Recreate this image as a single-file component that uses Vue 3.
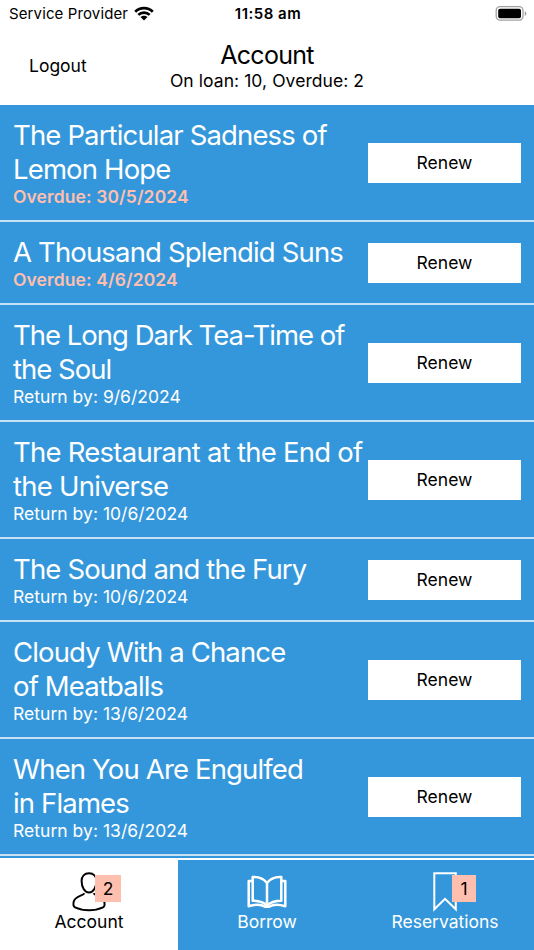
<script setup>
const loans = [
  { title: ['The Particular Sadness of', 'Lemon Hope'], due: '30/5/2024', overdue: true },
  { title: ['A Thousand Splendid Suns'], due: '4/6/2024', overdue: true },
  { title: ['The Long Dark Tea-Time of', 'the Soul'], due: '9/6/2024', tight: true },
  { title: ['The Restaurant at the End of', 'the Universe'], due: '10/6/2024', wide: true },
  { title: ['The Sound and the Fury'], due: '10/6/2024' },
  { title: ['Cloudy With a Chance', 'of Meatballs'], due: '13/6/2024' },
  { title: ['When You Are Engulfed', 'in Flames'], due: '13/6/2024' },
]
</script>

<template>
  <div class="screen">
    <div class="status">
      <div class="carrier">
        <span>Service Provider</span>
        <svg class="wifi" width="20" height="15" viewBox="0 0 20 15">
          <g fill="none" stroke="#000" stroke-width="2.7">
            <path d="M1.2 5.7C6.1 .8 13.9 .8 18.8 5.7" />
            <path d="M4.3 8.9C7.5 5.8 12.5 5.8 15.7 8.9" />
          </g>
          <path d="M6.5 11.1C8.5 9.2 11.5 9.2 13.5 11.1L10 14.6Z" />
        </svg>
      </div>
      <div class="time">11:58 am</div>
      <div class="power">
        <svg width="32" height="15" viewBox="0 0 32 15">
          <rect x="1.2" y=".7" width="26.8" height="13.4" rx="3.8" fill="none" stroke="#a0a0a0" stroke-width="1.3" />
          <rect x="3.2" y="2.8" width="22.8" height="9.4" rx="1.8" />
          <path d="M29.8 5.2C31.8 6 31.8 9 29.8 9.8Z" fill="#999" />
        </svg>
      </div>
    </div>

    <header class="header">
      <a class="logout">Logout</a>
      <div class="heading">
        <h1>Account</h1>
        <p>On loan: 10, Overdue: 2</p>
      </div>
    </header>

    <ul class="loans">
      <li v-for="loan in loans" :key="loan.title[0]" class="loan">
        <div class="info">
          <div v-for="line in loan.title" :key="line" class="title" :class="{ tight: loan.tight, wide: loan.wide }">{{ line }}</div>
          <div v-if="loan.overdue" class="due overdue">Overdue: {{ loan.due }}</div>
          <div v-else class="due">Return by: {{ loan.due }}</div>
        </div>
        <button class="renew">Renew</button>
      </li>
    </ul>

    <nav class="tabs">
      <div class="tab active">
        <div class="icon">
          <svg width="40" height="40" viewBox="0 0 40 40" fill="none" stroke="#000" stroke-width="2">
            <path d="M20 1.2C15.5 1.2 12.6 4.3 12.6 9C12.6 15 15.6 20.6 20 20.6S27.4 15 27.4 9C27.4 4.3 24.5 1.2 20 1.2Z" />
            <path d="M15.4 21.2C14.4 24.2 5.8 23.4 4.6 30.2C4.1 33 4.4 34.6 6 35.3C14 39.1 26 39.1 34 35.3C35.6 34.6 35.9 33 35.4 30.2C34.2 23.4 25.6 24.2 24.6 21.2" />
          </svg>
          <span class="badge">2</span>
        </div>
        <span class="label">Account</span>
      </div>
      <div class="tab">
        <div class="icon">
          <svg width="40" height="40" viewBox="0 0 40 40" fill="none" stroke="#fff" stroke-width="2.5" stroke-linejoin="round">
            <path d="M20 11C17 6.8 12 4.6 5.7 5V28.7C12 28.7 16.8 30.2 20 33.6C23.2 30.2 28 28.7 34.3 28.7V5C28 4.6 23 6.8 20 11V34" />
            <path d="M5.5 9H1.7V34.2C8 32.2 14 32 18 34.8H22C26 32 32 32.2 38.3 34.2V9H34.5" />
          </svg>
        </div>
        <span class="label">Borrow</span>
      </div>
      <div class="tab">
        <div class="icon">
          <svg width="40" height="40" viewBox="0 0 40 40" fill="none" stroke="#fff" stroke-width="2">
            <path d="M9.3 1.3H30.8V37.3L20 26.9L9.3 37.3Z" />
          </svg>
          <span class="badge narrow">1</span>
        </div>
        <span class="label">Reservations</span>
      </div>
    </nav>
  </div>
</template>

<style>
body {
  margin: 0;
  overflow: hidden;
}
</style>

<style scoped>
.screen {
  width: 534px;
  height: 950px;
  display: flex;
  flex-direction: column;
  background: #fff;
  color: #000;
  font-family: Inter, "Liberation Sans", sans-serif;
}
.status {
  display: grid;
  grid-template-columns: 1fr auto 1fr;
  align-items: center;
  height: 27px;
  margin-bottom: 1px;
  padding: 0 7px 0 9px;
  font-size: 15px;
}
.carrier {
  display: flex;
  align-items: center;
  gap: 6px;
  letter-spacing: 0.12px;
}
.wifi {
  margin-top: -1px;
}
.time {
  font-weight: 600;
  letter-spacing: 0.5px;
}
.power {
  display: flex;
  justify-content: flex-end;
  margin-top: -1px;
}
.header {
  display: grid;
  grid-template-columns: 1fr auto 1fr;
  height: 77px;
  flex: none;
}
.logout {
  padding: 27px 0 0 29px;
  font-size: 17.5px;
  line-height: 22px;
}
.heading {
  padding-top: 11px;
  text-align: center;
}
.heading h1 {
  margin: 0;
  font-size: 25px;
  font-weight: 400;
  line-height: 32px;
  letter-spacing: -0.7px;
}
.heading p {
  margin: 0;
  font-size: 17.5px;
  line-height: 20px;
  letter-spacing: 0.07px;
}
.loans {
  flex: 1;
  min-height: 0;
  margin: 0;
  padding: 0;
  list-style: none;
  overflow: hidden;
  background: #3597db;
}
.loan {
  box-sizing: border-box;
  display: flex;
  align-items: center;
  justify-content: space-between;
  padding: 13px 13px 12px;
  border-bottom: 2px solid #c6e1f5;
  color: #fff;
}
.info {
  white-space: nowrap;
}
.title {
  font-size: 27.5px;
  font-weight: 400;
  line-height: 34px;
  letter-spacing: -0.85px;
}
.title.tight {
  letter-spacing: -1px;
}
.title.wide {
  letter-spacing: -0.75px;
}
.due {
  font-size: 17.5px;
  line-height: 22px;
  letter-spacing: 0.03px;
}
.overdue {
  color: #ffbfaf;
  font-weight: 600;
  letter-spacing: 0.1px;
}
.renew {
  width: 153px;
  height: 40px;
  flex: none;
  margin-top: -1px;
  padding: 0 0 1px;
  border: 0;
  border-radius: 0;
  background: #fff;
  color: #000;
  font: inherit;
  font-size: 17.5px;
}
.tabs {
  display: grid;
  grid-template-columns: repeat(3, 1fr);
  flex: none;
  height: 90px;
  border-top: 2px solid #fff;
  background: #3597db;
}
.tab {
  display: flex;
  flex-direction: column;
  align-items: center;
  padding-top: 12px;
  color: #fff;
}
.tab.active {
  background: #fff;
  color: #000;
}
.icon {
  position: relative;
  height: 39px;
}
.icon svg {
  display: block;
}
.badge {
  position: absolute;
  left: 26px;
  top: 3px;
  width: 26px;
  height: 27px;
  background: #ffbfaf;
  color: #000;
  font-size: 17.5px;
  line-height: 27px;
  text-align: center;
}
.badge.narrow {
  left: 27px;
  width: 24px;
}
.label {
  font-size: 17.5px;
  line-height: 21px;
}
</style>
